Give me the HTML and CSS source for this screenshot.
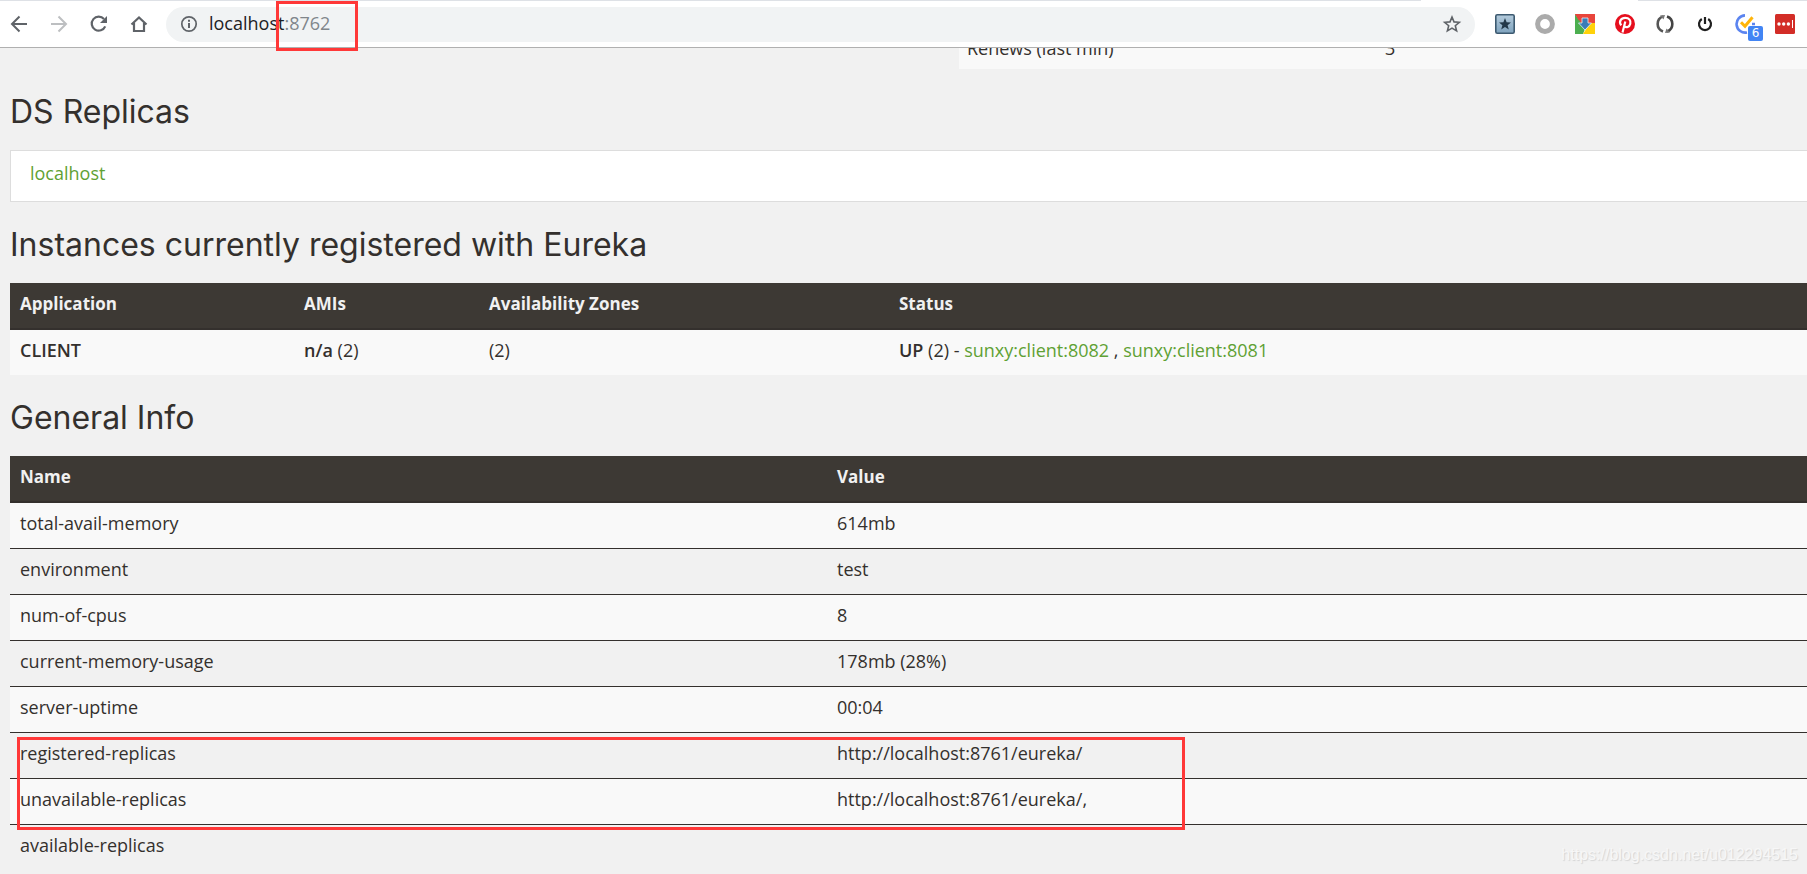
FILE: index.html
```html
<!DOCTYPE html>
<html lang="en">
<head>
<meta charset="utf-8">
<title>Eureka</title>
<link rel="stylesheet" href="styles.css">
</head>
<body>
<header class="toolbar">
  <nav class="nav">
    <button class="icon-btn" aria-label="Back"><svg width="20" height="20" viewBox="0 0 20 20"><path d="M18 10H3M10.500 2.500L3 10l7.500 7.500" fill="none" stroke="#5f6368" stroke-width="2"/></svg></button>
    <button class="icon-btn" aria-label="Forward"><svg width="20" height="20" viewBox="0 0 20 20"><path d="M2 10h15M9.500 2.500L17 10l-7.500 7.500" fill="none" stroke="#bdbfc1" stroke-width="2"/></svg></button>
    <button class="icon-btn" aria-label="Reload"><svg width="20" height="20" viewBox="0 0 20 20"><path d="M16.200 12.300A7 7 0 1 1 15 5" fill="none" stroke="#5f6368" stroke-width="2.200"/><path d="M18 2v7h-7z" fill="#5f6368"/></svg></button>
    <button class="icon-btn" aria-label="Home"><svg width="20" height="20" viewBox="0 0 20 20"><path d="M2.500 10.500L10 3.500l7.500 7M5 9v8h10V9" fill="none" stroke="#5f6368" stroke-width="2.200"/></svg></button>
  </nav>
  <div class="omnibox">
    <svg width="18" height="18" viewBox="0 0 18 18"><circle cx="9" cy="9" r="7.200" fill="none" stroke="#5f6368" stroke-width="1.700"/><path d="M9 8v5M9 4.800v1.900" stroke="#5f6368" stroke-width="2"/></svg>
    <span class="url">localhost<span class="port">:8762</span></span>
    <button class="icon-btn star" aria-label="Bookmark"><svg width="20" height="20" viewBox="0 0 20 20"><path d="M10 3l2 4.900 5.300.4-4 3.400 1.300 5.200-4.600-2.800-4.600 2.800 1.300-5.200-4-3.400 5.300-.4z" fill="none" stroke="#5f6368" stroke-width="1.600"/></svg></button>
  </div>
  <div class="extensions">
    <button class="icon-btn" aria-label="Bookmarks"><svg width="20" height="20" viewBox="0 0 20 20"><defs><linearGradient id="sky" x2="0" y2="1"><stop stop-color="#b4cbdc"/><stop offset="1" stop-color="#7fa3be"/></linearGradient></defs><rect x=".8" y=".8" width="18.400" height="18.400" rx="1.500" fill="url(#sky)" stroke="#3d5a70" stroke-width="1.600"/><path d="M10 4l1.600 4.200 4.400.2-3.400 2.800 1.200 4.300-3.800-2.400-3.800 2.400 1.200-4.300L4 8.400l4.400-.2z" fill="#23394a"/></svg></button>
    <button class="icon-btn" aria-label="Recorder"><svg width="20" height="20" viewBox="0 0 20 20"><circle cx="10" cy="10" r="7.400" fill="none" stroke="#ababab" stroke-width="5"/></svg></button>
    <button class="icon-btn" aria-label="Downloader"><svg width="20" height="20" viewBox="0 0 20 20"><path d="M0 0h20v9H5z" fill="#e8453c"/><path d="M0 0l10 15-2 5H0z" fill="#4caf50"/><path d="M20 9v11H8l7-11z" fill="#ffd20a"/><path d="M0 0h20v6H3.500z" fill="#e8453c"/><path d="M7 4h6v5h3.500L10 16 3.500 9H7z" fill="#3b7cb8" stroke="#e6eef5" stroke-width=".8"/></svg></button>
    <button class="icon-btn" aria-label="Pinterest"><svg width="20" height="20" viewBox="0 0 20 20"><circle cx="10" cy="10" r="10" fill="#e60f1e"/><path d="M6.200 11.400C3.300 7.500 6.200 3.800 10.200 3.800c4 0 5.900 2.800 5.100 5.900-.8 3.400-4.300 4.500-5.600 2.500M10.300 7.500L7.500 18.500" fill="none" stroke="#fff" stroke-width="2.200"/></svg></button>
    <button class="icon-btn" aria-label="Sync"><svg width="20" height="20" viewBox="0 0 20 20"><path d="M8 17.500C1 15 .8 5 8 2.400" fill="none" stroke="#555" stroke-width="2.600"/><path d="M12 2.500c7 2.500 7.200 12.500 0 15" fill="none" stroke="#444" stroke-width="2.600"/><path d="M5 1.500l5-.5-1.500 4.500zM15 18.500l-5 .5 1.500-4.500z" fill="#777"/></svg></button>
    <button class="icon-btn" aria-label="Power"><svg width="20" height="20" viewBox="0 0 20 20"><path d="M6.800 5a6 6 0 1 0 6.400 0M10 3v7" fill="none" stroke="#202020" stroke-width="2.200"/></svg></button>
    <button class="icon-btn task" aria-label="Tasks"><svg width="20" height="20" viewBox="0 0 20 20"><path d="M10 1.400a8.600 8.600 0 1 0 2 17M17 10h3" fill="none" stroke="#5b84f0" stroke-width="2.600"/><path d="M6 8.200l4 4 7.500-9" fill="none" stroke="#ffb50a" stroke-width="3"/></svg><span class="badge">6</span></button>
    <button class="icon-btn" aria-label="Passwords"><svg width="20" height="20" viewBox="0 0 20 20"><rect width="20" height="20" rx="1.500" fill="#d32d27"/><g fill="#fff"><circle cx="4" cy="10" r="1.700"/><circle cx="8.700" cy="10" r="1.700"/><circle cx="13.400" cy="10" r="1.700"/><path d="M17 6h1v8h-1z"/></g></svg></button>
  </div>
  <span class="tab-gap"></span>
  <span class="mark mark-port"></span>
</header>
<main class="page">
  <div class="status-clip">
    <table class="status"><tbody><tr><td class="w-renew">Renews (last min)</td><td>3</td></tr></tbody></table>
  </div>
  <h1>DS Replicas</h1>
  <ul class="replicas"><li><a href="#">localhost</a></li></ul>
  <h1>Instances currently registered with Eureka</h1>
  <table class="grid">
    <thead><tr><th class="w-app">Application</th><th class="w-ami">AMIs</th><th class="w-zone">Availability Zones</th><th>Status</th></tr></thead>
    <tbody><tr><td><b>CLIENT</b></td><td><b>n/a</b> (2)</td><td>(2)</td><td><b>UP</b> (2) - <a href="#">sunxy:client:8082</a> , <a href="#">sunxy:client:8081</a></td></tr></tbody>
  </table>
  <h1>General Info</h1>
  <div class="info">
    <table class="grid">
      <thead><tr><th class="w-name">Name</th><th>Value</th></tr></thead>
      <tbody>
        <tr><td>total-avail-memory</td><td>614mb</td></tr>
        <tr><td>environment</td><td>test</td></tr>
        <tr><td>num-of-cpus</td><td>8</td></tr>
        <tr><td>current-memory-usage</td><td>178mb (28%)</td></tr>
        <tr><td>server-uptime</td><td>00:04</td></tr>
        <tr><td>registered-replicas</td><td>http://localhost:8761/eureka/</td></tr>
        <tr><td>unavailable-replicas</td><td>http://localhost:8761/eureka/,</td></tr>
        <tr><td>available-replicas</td><td></td></tr>
      </tbody>
    </table>
    <span class="mark mark-rows"></span>
  </div>
</main>
<span class="watermark">https://blog.csdn.net/u012294515</span>
</body>
</html>
```
FILE: styles.css
```css
* { box-sizing: border-box; }
body {
  margin: 0;
  height: 100vh;
  overflow: hidden;
  background: #f1f1f1;
  color: #34302d;
  font: 18px/24px "Open Sans", "Noto Sans", sans-serif;
}
a { color: #5fa134; text-decoration: none; }
b { font-weight: 600; }

.toolbar {
  position: relative;
  display: flex;
  align-items: center;
  height: 48px;
  padding: 0 12px 0 9px;
  background: #fff;
  border-top: 1px solid #dee1e6;
  border-bottom: 1px solid #b0b0b0;
}
.nav, .extensions { display: flex; gap: 20px; }
.icon-btn {
  display: flex;
  width: 20px;
  height: 20px;
  padding: 0;
  border: 0;
  background: none;
}
.omnibox {
  display: flex;
  flex: 1;
  align-items: center;
  height: 35px;
  margin: 0 20px 0 17px;
  padding: 0 13px 0 14px;
  border-radius: 18px;
  background: #f1f3f4;
}
.url { margin-left: 11px; padding-bottom: 2px; color: #202124; }
.port { color: #80868b; }
.star { margin-left: auto; }
.task { position: relative; }
.badge {
  position: absolute;
  left: 13px;
  top: 12px;
  width: 15px;
  height: 15px;
  border-radius: 2px;
  background: #4285f4;
  color: #fff;
  font: 12px/15px "DejaVu Sans", sans-serif;
  text-align: center;
}
.tab-gap {
  position: absolute;
  top: -1px;
  right: 169px;
  width: 217px;
  height: 1px;
  background: #fff;
}
.mark {
  position: absolute;
  z-index: 2;
  border: 3px solid #ff3838;
  pointer-events: none;
}
.mark-port { left: 276px; top: 0; width: 82px; height: 50px; }
.mark-rows { left: 7px; top: 281px; width: 65%; height: 93px; }

.page { padding-left: 10px; }
.status-clip {
  display: flex;
  align-items: flex-end;
  height: 21px;
  margin-left: 949px;
  overflow: hidden;
}
table { width: 100%; border-spacing: 0; table-layout: fixed; }
th, td { padding: 8px 10px 13px; text-align: left; vertical-align: top; }
tbody tr:nth-child(odd) { background: #f9f9f9; }
.status td { padding: 8px 8px 9px; }
.w-renew { width: 418px; }
h1 {
  margin: 0;
  padding: 26px 0 22px;
  font: 400 32px/33px Inter, sans-serif;
}
.replicas {
  margin: 0;
  padding: 10px 19px 16px;
  list-style: none;
  background: #fff;
  border: 1px solid #ddd;
  border-right: 0;
}
.grid thead { background: #3d3934; color: #f1f1f1; }
.grid th { padding: 9px 10px 12px; border-bottom: 2px solid #34302d; font-size: 17px; font-weight: 700; }
.grid tbody tr + tr td { border-top: 1px solid #34302d; }
.grid td { height: 45px; }
.grid tr + tr td { height: 46px; }
.w-app { width: 284px; }
.w-ami { width: 185px; }
.w-zone { width: 410px; }
.w-name { width: 817px; }
.info { position: relative; }
.watermark {
  position: absolute;
  right: 9px;
  bottom: 9px;
  color: #f7f7f7;
  font: 16px/20px "Liberation Sans", Arial, sans-serif;
  text-shadow: 1px 1px 1px #d4d4d4;
}
```
